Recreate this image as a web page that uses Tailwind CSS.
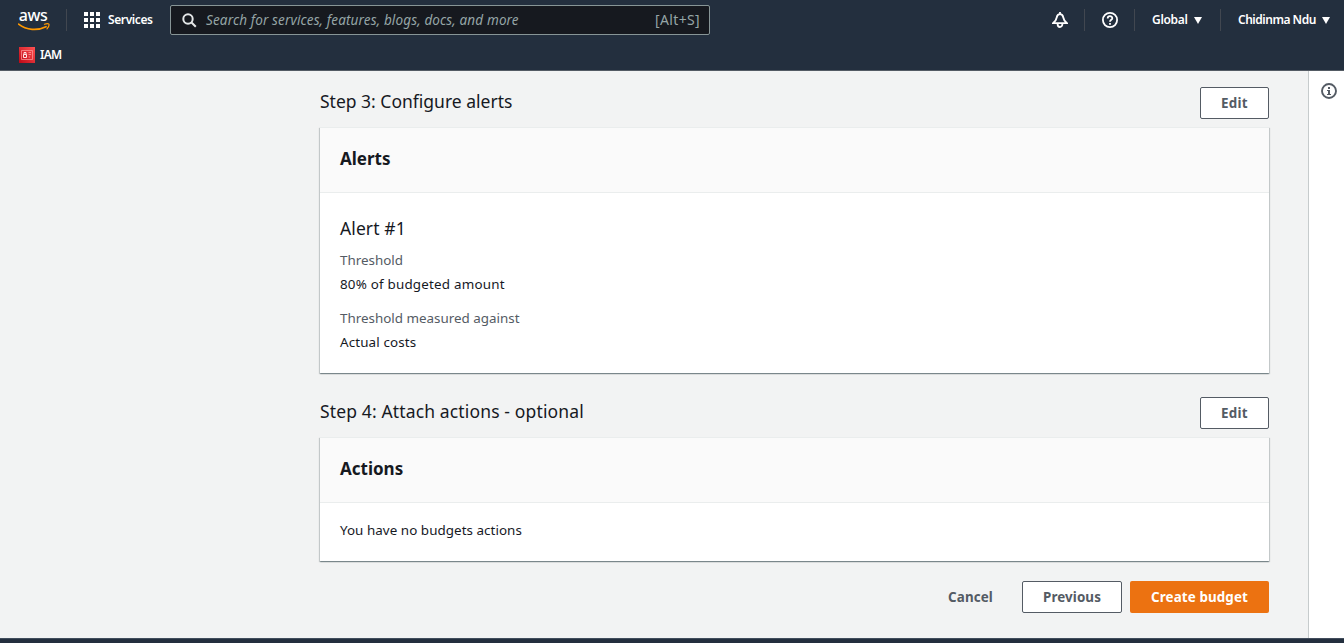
<!DOCTYPE html>
<html lang="en">
<head>
<meta charset="utf-8">
<title>Create budget</title>
<script src="https://cdn.jsdelivr.net/npm/@tailwindcss/browser@4"></script>
</head>
<body class="flex h-[643px] w-[1344px] flex-col overflow-hidden bg-[#f2f3f3] font-['Noto_Sans','Open_Sans',sans-serif] text-[13.4px] text-[#16191f]">
<header class="h-[71px] shrink-0 border-b border-[#545b64] bg-[#232f3e] text-white">
  <nav class="flex h-10 items-center text-xs font-semibold">
    <a class="ml-[18px] flex h-6 w-8 flex-col" aria-label="AWS">
      <span class="h-[14px] pr-[2px] text-center font-['Noto_Sans'] text-[16px] leading-[14px] font-medium tracking-[-0.4px]">aws</span>
      <svg class="mt-px h-[9px] w-8" viewBox="0 0 32 9" fill="none"><path d="M.6 1.200C8.500 7.300 19.500 7.900 28 3.700" stroke="#f90" stroke-width="1.700" stroke-linecap="round"/><path d="M26.500 1.300C28.500.500 30.300.500 30.900 1.200C31.300 2.200 30.400 4.300 29 5.800" stroke="#f90" stroke-width="1.200" stroke-linecap="round"/></svg>
    </a>
    <span class="ml-4 h-[22px] w-px bg-[#414750]"></span>
    <svg class="ml-[17px] size-4" viewBox="0 0 16 16" fill="#fff"><path d="M0 0h4v4H0zM6 0h4v4H6zM12 0h4v4h-4zM0 6h4v4H0zM6 6h4v4H6zM12 6h4v4h-4zM0 12h4v4H0zM6 12h4v4H6zM12 12h4v4h-4z"/></svg>
    <span class="ml-2 w-[62px] whitespace-nowrap tracking-[-0.4px]">Services</span>
    <div class="flex h-[30px] w-[540px] items-center rounded-[2px] border border-[#879596] bg-[#16191f] pr-[9px] pl-[11px] text-[13.5px] font-normal text-[#95a5a6]">
      <svg class="size-[15px]" viewBox="0 0 15 15" fill="none" stroke="#e4e7e8" stroke-width="2"><circle cx="6" cy="6" r="4.700"/><path d="M9.500 9.500l4.300 4.300"/></svg>
      <span class="ml-[9px] whitespace-nowrap italic tracking-[0.14px]">Search for services, features, blogs, docs, and more</span>
      <span class="ml-auto text-sm tracking-[0.35px]">[Alt+S]</span>
    </div>
    <svg class="ml-[342px] size-4" viewBox="0 0 16 16" fill="none" stroke="#fff" stroke-width="1.800"><path d="M8 2.200C6 2.200 5 3.800 4.700 5.500C4.300 8 3.300 9.600 1 11.200H15C12.700 9.600 11.700 8 11.300 5.500C11 3.800 10 2.200 8 2.200ZM8 0V2M5.600 12C5.600 16 10.400 16 10.400 12"/></svg>
    <span class="ml-4 h-[22px] w-px bg-[#414750]"></span>
    <svg class="ml-[17px] size-4" viewBox="0 0 16 16" fill="none" stroke="#fff" stroke-width="1.800"><circle cx="8" cy="8" r="7.100"/><path d="M5.700 6.500C5.700 3.400 10.300 3.500 10.300 6.200C10.300 7.900 8 7.800 8 9.800M8 10.900V12.700"/></svg>
    <span class="ml-4 h-[22px] w-px bg-[#414750]"></span>
    <span class="ml-[17px] w-[42px] whitespace-nowrap tracking-[-0.3px]">Global</span>
    <svg class="h-[7px] w-2" viewBox="0 0 8 7"><path d="M0 0h8L4 7z" fill="#fff"/></svg>
    <span class="ml-[18px] h-[22px] w-px bg-[#414750]"></span>
    <span class="ml-[17px] w-[84px] whitespace-nowrap tracking-[-0.48px]">Chidinma Ndu</span>
    <svg class="h-[7px] w-2" viewBox="0 0 8 7"><path d="M0 0h8L4 7z" fill="#fff"/></svg>
  </nav>
  <div class="flex h-[30px] items-center pl-[19px] text-xs font-semibold">
    <svg class="size-4" viewBox="0 0 16 16" fill="none"><defs><linearGradient id="r" x1="0" y1="1" x2="1" y2="0"><stop stop-color="#bd0816"/><stop offset="1" stop-color="#ff5252"/></linearGradient></defs><path fill="url(#r)" d="M0 0h16v16H0z"/><path d="M2.500 3.500h11v9h-11z" stroke="#ff9c9c" stroke-width=".7"/><path d="M4.500 7.500h3v3h-3zM5 7.500v-2h2v2" stroke="#ffe4e4"/><path d="M9.500 5.500h2.500M9.500 7.500h2.500M9.500 10h1.500" stroke="#ff9c9c" stroke-width=".8"/></svg>
    <span class="ml-[5px] tracking-[-0.8px]">IAM</span>
  </div>
</header>
<div class="flex h-[567px] shrink-0">
  <main class="w-[1308px] pt-4 pr-[39px] pl-80">
    <section>
      <div class="flex h-8 items-center justify-between">
        <h2 class="-mt-[3px] text-[17.5px] whitespace-nowrap">Step 3: Configure alerts</h2>
        <button class="h-8 w-[69px] rounded-[2px] border border-[#545b64] bg-white font-bold tracking-[0.3px] text-[#545b64]">Edit</button>
      </div>
      <div class="mt-2 h-[246px] border-t border-[#eaeded] bg-white shadow-[0_1px_1px_0_rgba(0,28,36,0.3),1px_1px_1px_0_rgba(0,28,36,0.15),-1px_1px_1px_0_rgba(0,28,36,0.15)]">
        <h3 class="flex h-[65px] items-center border-b border-[#eaeded] bg-[#fafafa] px-5 text-[17px] font-bold"><span class="-mt-[3px]">Alerts</span></h3>
        <div class="px-5 pt-[21px] leading-[22px]">
          <h4 class="text-[17.5px] leading-7 tracking-[0.1px]">Alert #1</h4>
          <dl>
            <dt class="mt-[7px] text-[#545b64]">Threshold</dt>
            <dd class="mt-[2px] tracking-[0.2px]">80% of budgeted amount</dd>
            <dt class="mt-3 text-[#545b64]">Threshold measured against</dt>
            <dd class="mt-[2px] tracking-[0.13px]">Actual costs</dd>
          </dl>
        </div>
      </div>
    </section>
    <section class="mt-6">
      <div class="flex h-8 items-center justify-between">
        <h2 class="-mt-[3px] text-[17.5px] whitespace-nowrap tracking-[0.14px]">Step 4: Attach actions - optional</h2>
        <button class="h-8 w-[69px] rounded-[2px] border border-[#545b64] bg-white font-bold tracking-[0.3px] text-[#545b64]">Edit</button>
      </div>
      <div class="mt-2 h-[124px] border-t border-[#eaeded] bg-white shadow-[0_1px_1px_0_rgba(0,28,36,0.3),1px_1px_1px_0_rgba(0,28,36,0.15),-1px_1px_1px_0_rgba(0,28,36,0.15)]">
        <h3 class="flex h-[65px] items-center border-b border-[#eaeded] bg-[#fafafa] px-5 text-[17px] font-bold"><span class="-mt-[3px]">Actions</span></h3>
        <p class="px-5 pt-4 leading-[22px] tracking-[0.05px]">You have no budgets actions</p>
      </div>
    </section>
    <div class="mt-5 flex h-8 items-center justify-end font-bold text-[#545b64]">
      <button class="mr-[29px] w-[45px] tracking-[0.1px] whitespace-nowrap">Cancel</button>
      <button class="mr-2 h-8 w-[100px] rounded-[2px] border border-[#545b64] bg-white tracking-[0.1px]">Previous</button>
      <button class="h-8 w-[139px] rounded-[2px] bg-[#ec7211] tracking-[0.1px] text-white">Create budget</button>
    </div>
  </main>
  <aside class="w-9 border-l border-[#c6cbcc] bg-white pt-3 pl-3">
    <svg class="size-4" viewBox="0 0 16 16" fill="none" stroke="#545b64"><circle cx="8" cy="8" r="7" stroke-width="1.900"/><path d="M7 4h2v2H7zM6 7h3v4h1v1H6v-1h1V8H6z" fill="#545b64" stroke="none"/></svg>
  </aside>
</div>
<footer class="h-[5px] shrink-0 border-t border-[#414d5c] bg-[#232f3e]"></footer>
</body>
</html>
